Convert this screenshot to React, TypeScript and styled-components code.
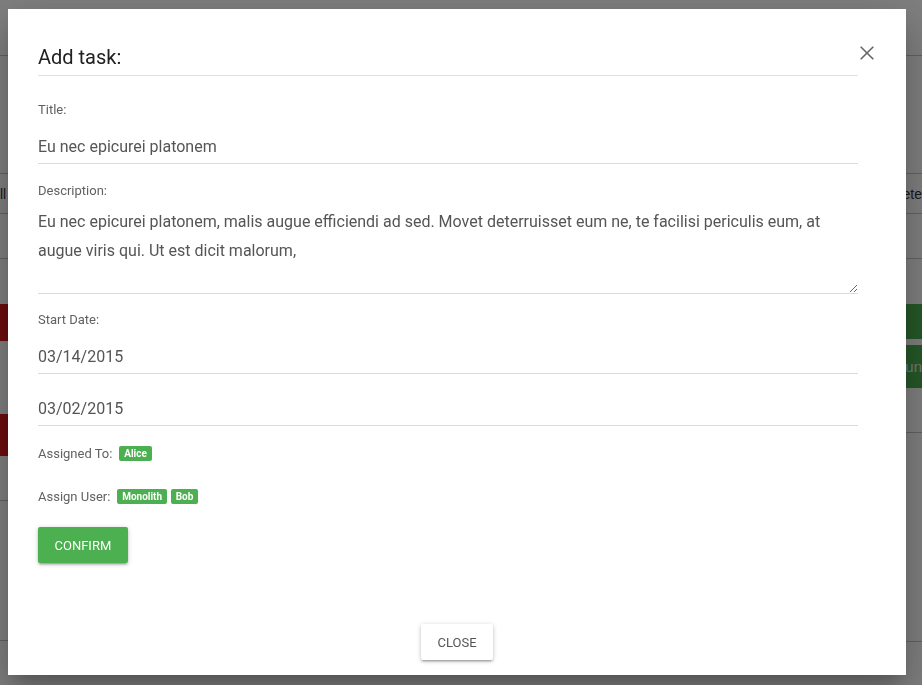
import React from "react";
import styled, { createGlobalStyle } from "styled-components";

const GlobalStyle = createGlobalStyle`
  html, body {
    margin: 0;
    padding: 0;
    overflow: hidden;
  }
  body {
    font-family: Roboto, "Noto Sans", "Liberation Sans", sans-serif;
    background: #ffffff;
  }
  * { box-sizing: border-box; }
`;

/* ---------- background page (dimmed by the overlay) ---------- */

const Page = styled.div`
  position: relative;
  width: 922px;
  height: 685px;
  background: #ffffff;
  overflow: hidden;
`;

const BgTopBar = styled.div`
  height: 56px;
  border-bottom: 1px solid #c4c4c4;
`;

const BgBoard = styled.div`
  display: flex;
  justify-content: space-between;
`;

const BgColumn = styled.div`
  width: 300px;
  display: flex;
  flex-direction: column;
`;

const BgRow = styled.div<{ $h: number; $align?: "left" | "right" }>`
  height: ${(p) => p.$h}px;
  border-bottom: 1px solid #c4c4c4;
  display: flex;
  align-items: center;
  justify-content: ${(p) => (p.$align === "right" ? "flex-end" : "flex-start")};
  font-family: "Liberation Sans", Arial, sans-serif;
  font-size: 14px;
  color: #333;
`;

const BgBlock = styled.div<{ $h: number; $mt: number; $color: string }>`
  height: ${(p) => p.$h}px;
  margin-top: ${(p) => p.$mt}px;
  background: ${(p) => p.$color};
  display: flex;
  align-items: center;
  justify-content: flex-end;
  font-family: "Liberation Sans", Arial, sans-serif;
  font-size: 15px;
  color: #e8f5e9;
`;

/* ---------- overlay + modal ---------- */

const Overlay = styled.div`
  position: fixed;
  inset: 0;
  background: rgba(0, 0, 0, 0.5);
  display: flex;
  align-items: flex-start;
`;

const Modal = styled.div`
  margin: 9px 0 0 8px;
  width: 898px;
  height: 666px;
  background: #ffffff;
  display: flex;
  flex-direction: column;
  box-shadow: 0 24px 38px 3px rgba(0, 0, 0, 0.14),
    0 9px 46px 8px rgba(0, 0, 0, 0.12), 0 11px 15px -7px rgba(0, 0, 0, 0.2);
`;

const ModalBody = styled.div`
  flex: 1;
  padding: 36px 30px 0;
`;

const Header = styled.div`
  display: flex;
  align-items: flex-start;
`;

const Title = styled.h4`
  flex: 1;
  margin: 0;
  padding-bottom: 6px;
  border-bottom: 1px solid #e0e0e0;
  font-size: 20px;
  line-height: 24px;
  font-weight: 400;
  color: #212121;
`;

const CloseIcon = styled.button`
  width: 18px;
  height: 14px;
  margin-top: 1px;
  padding: 0;
  border: none;
  background: transparent;
  display: flex;
  justify-content: center;
  cursor: pointer;
`;

const Form = styled.div`
  padding-right: 18px;
`;

const Field = styled.div<{ $mt: number }>`
  margin-top: ${(p) => p.$mt}px;
`;

const Label = styled.label`
  display: block;
  font-size: 13px;
  line-height: 16px;
  color: #616161;
  margin-bottom: 8px;
`;

const TextInput = styled.input<{ $mt?: number }>`
  display: block;
  width: 100%;
  height: 38px;
  margin: ${(p) => p.$mt ?? 0}px 0 0;
  padding: 10px 0 7px;
  border: none;
  border-bottom: 1px solid #dcdcdc;
  outline: none;
  background: transparent;
  font-family: inherit;
  font-size: 16px;
  line-height: 20px;
  color: #555555;
`;

const TextArea = styled.textarea`
  display: block;
  width: 100%;
  height: 87px;
  margin: 0;
  padding: 1px 0 0;
  border: none;
  border-bottom: 1px solid #dcdcdc;
  outline: none;
  background: transparent;
  font-family: inherit;
  font-size: 16px;
  line-height: 28.5px;
  color: #555555;
  resize: both;
`;

const AssignRow = styled.div<{ $mt: number }>`
  display: flex;
  align-items: center;
  gap: 4px;
  height: 16px;
  margin-top: ${(p) => p.$mt}px;
  font-size: 13px;
  color: #616161;
`;

const RowLabel = styled.span`
  margin-right: 3px;
`;

const Badge = styled.span`
  display: inline-block;
  height: 15px;
  line-height: 15px;
  padding: 0 4.8px;
  border-radius: 2px;
  background: #4caf50;
  color: #ffffff;
  font-size: 10px;
  font-weight: 700;
`;

const Button = styled.button<{ $variant: "primary" | "flat" }>`
  height: 36px;
  padding: 0 16.5px;
  border: none;
  border-radius: 2px;
  font-family: inherit;
  font-size: 13px;
  text-transform: uppercase;
  cursor: pointer;
  background: ${(p) => (p.$variant === "primary" ? "#4caf50" : "#ffffff")};
  color: ${(p) => (p.$variant === "primary" ? "#ffffff" : "#555555")};
  box-shadow: 0 2px 2px 0 rgba(0, 0, 0, 0.14), 0 3px 1px -2px rgba(0, 0, 0, 0.12),
    0 1px 5px 0 rgba(0, 0, 0, 0.2);
`;

const ConfirmWrap = styled.div`
  margin-top: 23px;
`;

const Footer = styled.div`
  display: flex;
  justify-content: center;
  padding: 0 0 15px;
`;

export default function App() {
  return (
    <Page>
      <GlobalStyle />
      <BgTopBar />
      <BgBoard>
        <BgColumn>
          <BgRow $h={118} />
          <BgRow $h={40}>ll</BgRow>
          <BgRow $h={45} />
          <BgBlock $h={37} $mt={45} $color="#d81a1a" />
          <BgBlock $h={42} $mt={73} $color="#d81a1a" />
          <BgRow $h={45} />
          <BgRow $h={140} />
        </BgColumn>
        <BgColumn>
          <BgRow $h={118} />
          <BgRow $h={40} $align="right">Delete</BgRow>
          <BgRow $h={45} />
          <BgBlock $h={35} $mt={45} $color="#4caf50" />
          <BgBlock $h={43} $mt={6} $color="#4caf50">Run</BgBlock>
          <BgRow $h={45} />
          <BgRow $h={209} />
        </BgColumn>
      </BgBoard>

      <Overlay>
        <Modal>
          <ModalBody>
            <Header>
              <Title>Add task:</Title>
              <CloseIcon aria-label="Close">
                <svg width="14" height="14" viewBox="0 0 14 14">
                  <path d="M0.7 0.7 L13.3 13.3 M13.3 0.7 L0.7 13.3" stroke="#666" strokeWidth="1.6" fill="none" />
                </svg>
              </CloseIcon>
            </Header>
            <Form>
              <Field $mt={26}>
                <Label>Title:</Label>
                <TextInput defaultValue="Eu nec epicurei platonem" />
              </Field>
              <Field $mt={19}>
                <Label>Description:</Label>
                <TextArea defaultValue="Eu nec epicurei platonem, malis augue efficiendi ad sed. Movet deterruisset eum ne, te facilisi periculis eum, at augue viris qui. Ut est dicit malorum," />
              </Field>
              <Field $mt={18}>
                <Label>Start Date:</Label>
                <TextInput defaultValue="03/14/2015" />
                <TextInput $mt={14} defaultValue="03/02/2015" />
              </Field>
              <AssignRow $mt={19}>
                <RowLabel>Assigned To:</RowLabel>
                <Badge>Alice</Badge>
              </AssignRow>
              <AssignRow $mt={27}>
                <RowLabel>Assign User:</RowLabel>
                <Badge>Monolith</Badge>
                <Badge>Bob</Badge>
              </AssignRow>
              <ConfirmWrap>
                <Button $variant="primary">Confirm</Button>
              </ConfirmWrap>
            </Form>
          </ModalBody>
          <Footer>
            <Button $variant="flat">Close</Button>
          </Footer>
        </Modal>
      </Overlay>
    </Page>
  );
}
